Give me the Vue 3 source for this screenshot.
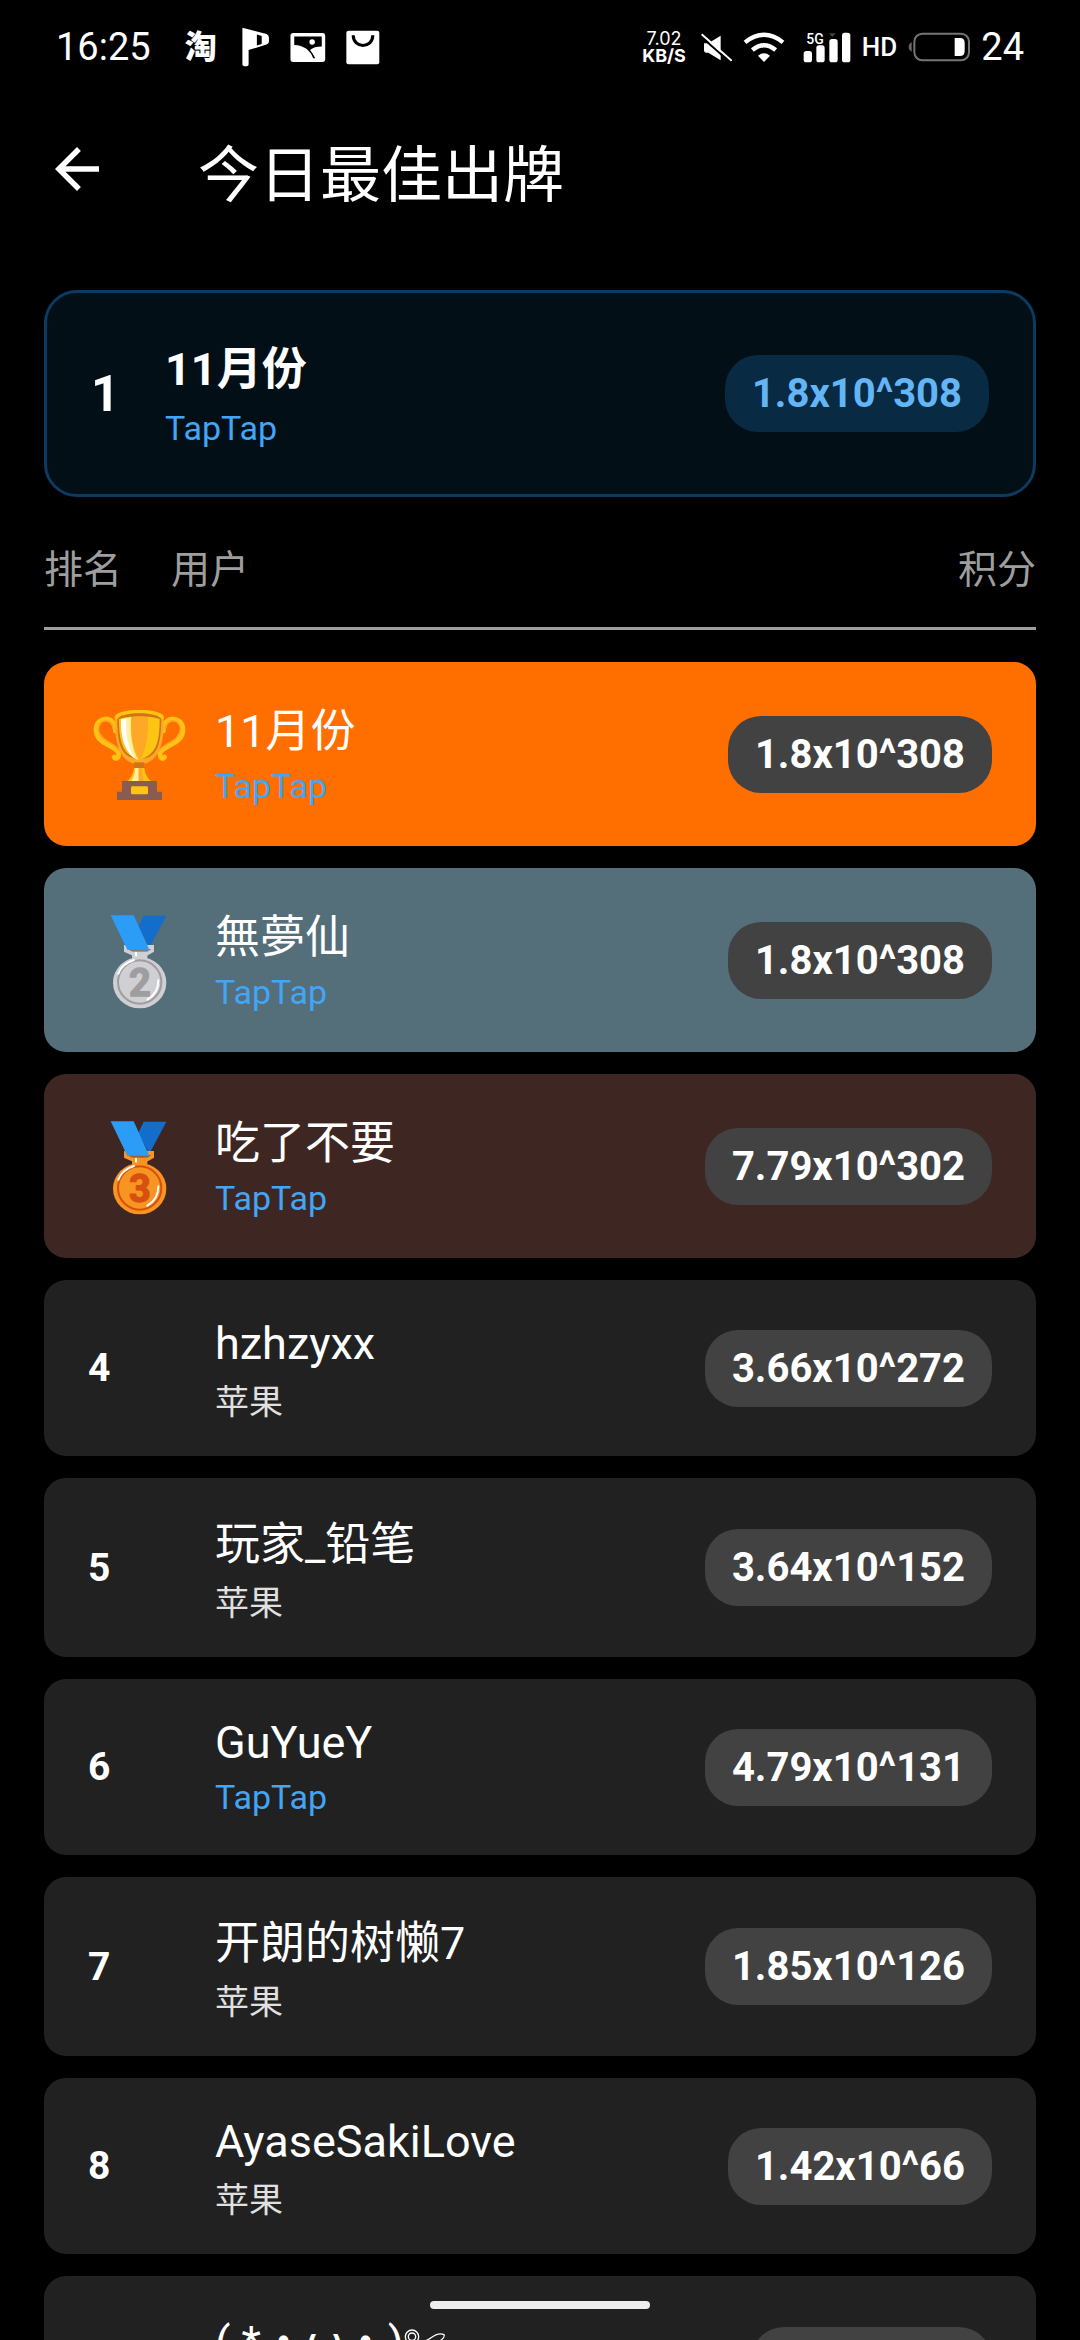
<script setup>
import { ref } from 'vue'

const best = ref({ rank: 1, name: '11月份', source: 'TapTap', score: '1.8x10^308' })

const players = ref([
  { rank: 1, name: '11月份', source: 'TapTap', score: '1.8x10^308' },
  { rank: 2, name: '無夢仙', source: 'TapTap', score: '1.8x10^308' },
  { rank: 3, name: '吃了不要', source: 'TapTap', score: '7.79x10^302' },
  { rank: 4, name: 'hzhzyxx', source: '苹果', score: '3.66x10^272' },
  { rank: 5, name: '玩家_铅笔', source: '苹果', score: '3.64x10^152' },
  { rank: 6, name: 'GuYueY', source: 'TapTap', score: '4.79x10^131' },
  { rank: 7, name: '开朗的树懒7', source: '苹果', score: '1.85x10^126' },
  { rank: 8, name: 'AyaseSakiLove', source: '苹果', score: '1.42x10^66' },
  { rank: 9, name: '( *・ω・)', source: '苹果', score: '1.3x10^66', flower: true }
])

// 银牌 / 铜牌配色
const medals = {
  2: { body: '#d0cfd4', ring: '#9e9ea0', shine: '#ffffff' },
  3: { body: '#f79422', ring: '#d8500f', shine: '#ffffff' }
}

const isWide = (text) => /[^\x00-\x7f]/.test(text)

const goBack = () => window.history.back()
</script>

<template>
  <div class="screen">
    <div class="status-bar">
      <div class="status-left">
        <span class="clock">16:25</span>
        <span class="tao">淘</span>
        <svg class="ic-flag" viewBox="704 82 84 116">
          <path d="M708 84 L778 102 Q785 105 785 112 V125 Q785 130 778 133 L726 149 V190 Q726 196 718 196 Q708 196 708 190 Z" fill="#fff" />
          <path d="M750 104 L764 108 V131 L750 136 Z" fill="#000" />
        </svg>
        <svg class="ic-photo" viewBox="850 92 104 96">
          <rect x="851" y="98" width="101" height="84" rx="8" fill="#fff" />
          <path d="M862 108 H942 V137 Q920 137 908 147 Q917 158 923 171 H917 Q903 135 862 133 Z" fill="#000" />
          <circle cx="914" cy="124" r="8" fill="#fff" />
        </svg>
        <svg class="ic-bag" viewBox="1012 88 99 102">
          <rect x="1013" y="90" width="96" height="98" rx="6" fill="#fff" />
          <path d="M1033 103 C1033 143 1090 143 1090 103" fill="none" stroke="#000" stroke-width="9" />
        </svg>
      </div>

      <div class="status-right">
        <div class="net-speed">
          <span>7.02</span>
          <b>KB/S</b>
        </div>
        <svg class="ic-mute" viewBox="303 93 93 87">
          <path d="M312 124 H325 L362 101 V175 L325 152 H318 Q312 152 312 145 Z" fill="#fff" />
          <path d="M301 102 L392 182" stroke="#000" stroke-width="6" />
          <path d="M305 97 L395 176" stroke="#fff" stroke-width="6" />
        </svg>
        <svg class="ic-wifi" viewBox="428 90 126 93">
          <path d="M434 121 Q491 76 548 121" fill="none" stroke="#fff" stroke-width="13" />
          <path d="M456 144 Q491 115 526 144" fill="none" stroke="#fff" stroke-width="13" />
          <path d="M473 161 Q491 147 509 161 L491 180 Z" fill="#fff" />
        </svg>
        <svg class="ic-signal" viewBox="606 90 144 93">
          <text x="616" y="125" class="net-type">5G</text>
          <rect x="608" y="147" width="25" height="34" rx="8" fill="#fff" />
          <rect x="646" y="130" width="25" height="51" rx="8" fill="#fff" />
          <rect x="685" y="111" width="25" height="70" rx="8" fill="#fff" />
          <rect x="723" y="92" width="25" height="89" rx="8" fill="#fff" />
          <path d="M684 94 H704 L694 105 Z" fill="#444" />
        </svg>
        <span class="hd">HD</span>
        <svg class="ic-battery" viewBox="928 93 186 90">
          <path d="M939 124 Q930 128 930 138 Q930 148 939 152 Z" fill="#666" />
          <rect x="947" y="98" width="164" height="80" rx="24" fill="none" stroke="#757575" stroke-width="6" />
          <path d="M1068 111 H1084 Q1098 111 1098 126 V150 Q1098 165 1084 165 H1068 Z" fill="#fff" />
        </svg>
        <span class="clock">24</span>
      </div>
    </div>

    <header class="app-bar">
      <button class="back" aria-label="返回" @click="goBack">
        <svg viewBox="4 4 16 16">
          <path d="M20 11H7.83l5.59-5.59L12 4l-8 8 8 8 1.41-1.41L7.83 13H20v-2z" fill="#fff" />
        </svg>
      </button>
      <h1>今日最佳出牌</h1>
    </header>

    <main class="content">
      <section class="best">
        <span class="best-rank">{{ best.rank }}</span>
        <div class="best-user">
          <div class="best-name">{{ best.name }}</div>
          <div class="source taptap">{{ best.source }}</div>
        </div>
        <span class="score score-blue">{{ best.score }}</span>
      </section>

      <table class="board">
        <thead>
          <tr>
            <th>排名</th>
            <th>用户</th>
            <th class="right">积分</th>
          </tr>
        </thead>
        <tbody>
          <tr v-for="p in players" :key="p.rank" :class="['row', 'rank-' + p.rank]">
            <td class="rank">
              <svg v-if="p.rank === 1" class="medal" viewBox="174 156 309 309">
                <g fill="none" stroke="#fdc511" stroke-width="14" stroke-linecap="round">
                  <path d="M256 240 C256 190 198 195 198 236 C198 284 264 282 266 310 C266 324 256 326 252 318" />
                  <path d="M400 240 C400 190 459 195 459 236 C459 284 392 282 390 310 C390 324 400 326 404 318" />
                </g>
                <g fill="none" stroke="#ffa726" stroke-width="5" stroke-linecap="round">
                  <path d="M250 232 C248 200 205 200 205 236 C207 270 260 278 268 300" />
                  <path d="M406 232 C408 200 452 200 452 236 C450 270 398 278 388 300" />
                </g>
                <path d="M254 200 C254 169 402 169 402 200 C402 268 392 338 328 340 C264 338 254 268 254 200 Z" fill="#ffa726" />
                <path d="M254 200 C254 169 402 169 402 200 L394 206 C392 180 264 180 262 206 Z" fill="#fdc511" />
                <path d="M262 206 C264 180 392 180 394 206 C392 270 386 304 354 319 L328 326 L302 319 C270 304 262 270 262 206 Z" fill="#d07516" />
                <path d="M267 204 C290 194 366 194 389 204 C389 262 382 300 348 318 L328 328 L308 318 C274 300 267 262 267 204 Z" fill="#fdc511" />
                <path d="M304 198 C320 196 338 196 354 198 C356 246 350 292 330 328 C306 292 302 246 304 198 Z" fill="#ffa726" />
                <path d="M273 205 L303 199 C300 250 306 296 324 327 C286 308 272 262 273 205 Z" fill="#fff0a6" />
                <path d="M273 205 L288 202 C286 252 296 296 316 324 C286 304 272 262 273 205 Z" fill="#fff" />
                <path d="M312 334 H343 V352 H312 Z" fill="#d07516" />
                <path d="M312 351 H343 Q346 376 362 390 H293 Q309 376 312 351 Z" fill="#fdc511" />
                <path d="M316 351 H326 V390 H304 Q315 374 316 351 Z" fill="#fff0a6" />
                <path d="M326 351 H336 Q337 374 342 390 H326 Z" fill="#ffa726" />
                <path d="M276 390 H381 V422 H396 V447 H261 V422 H276 Z" fill="#8a5b50" />
                <rect x="303" y="406" width="51" height="24" rx="4" fill="#fdc511" />
              </svg>
              <svg v-else-if="medals[p.rank]" class="medal" viewBox="174 146 309 309">
                <path d="M341 166 H409 L358 262 L325 200 Z" fill="#126dcb" />
                <path
                  d="M282 254 H372 V274 L348 288 Q354 298 330 298 Q306 298 312 288 L282 274 Z"
                  :fill="medals[p.rank].body"
                />
                <path d="M292 266 L314 278 H346 L364 266 Z" fill="#4a4547" opacity="0.6" />
                <path d="M306 274 H352 V294 H306 Z" :fill="medals[p.rank].body" />
                <path d="M242 165 H311 L358 268 H292 Z" fill="#2b9df6" />
                <ellipse cx="329" cy="367" rx="80" ry="77" :fill="medals[p.rank].body" />
                <ellipse
                  cx="329" cy="365" rx="65" ry="65" fill="none"
                  :stroke="medals[p.rank].ring" stroke-width="6"
                />
                <g fill="none" :stroke="medals[p.rank].shine" stroke-width="6" stroke-linecap="round">
                  <path d="M265 340 Q276 310 312 299" />
                  <path d="M385 360 Q385 400 352 418" />
                  <path d="M318 277 V286" />
                </g>
                <text
                  x="330" y="407" class="medal-num"
                  :fill="medals[p.rank].ring" :stroke="medals[p.rank].ring"
                >{{ p.rank }}</text>
              </svg>
              <template v-else>{{ p.rank }}</template>
            </td>
            <td class="user">
              <div :class="['name', { wide: isWide(p.name) }]">
                {{ p.name }}<svg v-if="p.flower" class="flower" viewBox="0 0 132 90">
                  <g fill="none" stroke="#fff" stroke-width="4">
                    <circle cx="24" cy="26" r="20" />
                    <circle cx="24" cy="26" r="11" />
                    <path d="M40 38 Q62 44 80 30 Q104 12 120 20 Q124 28 104 42 Q84 56 60 80" />
                  </g>
                </svg>
              </div>
              <div :class="['source', { taptap: p.source === 'TapTap' }]">{{ p.source }}</div>
            </td>
            <td class="right"><span class="score">{{ p.score }}</span></td>
          </tr>
        </tbody>
      </table>
    </main>

    <div class="home-indicator"></div>
  </div>
</template>

<style>
body { background: #000; }
</style>

<style scoped>
.screen {
  position: relative;
  display: flex;
  flex-direction: column;
  height: 100vh;
  overflow: hidden;
  background: #000;
  color: #fff;
  font-family: Roboto, 'Noto Sans CJK SC', sans-serif;
}
svg { display: block; flex-shrink: 0; }

/* 状态栏 */
.status-bar { display: flex; justify-content: space-between; align-items: center; height: 92px; padding: 2px 56px 0; box-sizing: border-box; flex-shrink: 0; }
.status-left, .status-right { display: flex; align-items: center; }
.status-right { gap: 11px; }
.clock { font-size: 38px; line-height: 44px; }
.tao { margin: 0 24px 0 34px; font-size: 32px; line-height: 44px; font-weight: 900; }
.ic-flag { width: 29px; height: 40px; margin-right: 20px; }
.ic-photo { width: 36px; height: 33px; margin-right: 20px; }
.ic-bag { width: 34px; height: 35px; }
.net-speed { display: flex; flex-direction: column; align-items: center; margin-right: 4px; font-family: Inter, Roboto, sans-serif; font-size: 18px; line-height: 17px; }
.ic-mute { width: 31px; height: 29px; }
.ic-wifi { width: 42px; height: 31px; margin-right: 7px; }
.ic-signal { width: 48px; height: 31px; }
.net-type { font-family: Roboto, sans-serif; font-size: 42px; font-weight: 500; fill: #fff; }
.hd { font-size: 26px; line-height: 44px; font-weight: 500; }
.ic-battery { width: 62px; height: 30px; }

/* 标题栏 */
.app-bar { display: flex; align-items: center; gap: 88px; height: 154px; padding: 0 44px; flex-shrink: 0; }
.back { display: flex; align-items: center; justify-content: center; width: 66px; height: 66px; padding: 0; border: none; background: none; cursor: pointer; }
.back svg { width: 44px; height: 44px; }
h1 { margin: 0; padding-top: 14px; font-size: 61px; line-height: 88px; font-weight: 400; }

.content { flex: 1; min-height: 0; overflow: hidden; padding: 44px 44px 0; }

/* 当前最佳 */
.best { display: flex; align-items: center; height: 207px; padding: 0 44px; border: 3px solid #0d3a61; border-radius: 33px; background: #020f17; box-sizing: border-box; }
.best-rank { width: 74px; font-size: 50px; line-height: 58px; font-weight: 700; }
.best-user { flex: 1; }
.best-name { font-size: 45px; line-height: 60px; font-weight: 700; }

.source { height: 48px; font-size: 34px; line-height: 64px; color: #e0e0e0; }
.source.taptap { line-height: 56px; color: #42a5f5; }
.score { display: inline-block; padding: 0 27px; border-radius: 33px; background: #424242; font-size: 40px; line-height: 77px; font-weight: 700; white-space: nowrap; }
.score-blue { background: #092a43; color: #64b5f6; }

/* 排行榜 */
.board, tbody { display: flex; flex-direction: column; }
thead { display: block; margin: 44px 0 32px; padding-bottom: 28px; border-bottom: 3px solid #9e9e9e; }
tbody { gap: 22px; }
tr { display: grid; grid-template-columns: 127px 1fr auto; align-items: center; }
th { padding: 0; font-size: 39px; line-height: 58px; font-weight: 400; color: #9e9e9e; text-align: left; }
td { padding: 0; }
th.right, td.right { text-align: right; }
.row { padding: 38px 44px; border-radius: 22px; background: #212121; }
.rank-1 { background: #ff6f00; }
.rank-2 { background: #546e7a; }
.rank-3 { background: #3e2723; }
.rank-1, .rank-2, .rank-3 { min-height: 108px; }
.rank { font-size: 39px; font-weight: 700; }
.medal { width: 103px; height: 103px; }
.medal-num { font-family: Roboto, sans-serif; font-size: 114px; font-weight: 700; text-anchor: middle; stroke-width: 4; stroke-linejoin: round; }
.name { display: flex; align-items: flex-start; height: 52px; font-size: 45px; line-height: 52px; white-space: pre; }
.name.wide { height: 55px; line-height: 57px; }
.flower { width: 44px; height: 30px; margin-top: 14px; }

.home-indicator { position: absolute; left: 50%; bottom: 31px; width: 220px; height: 8px; margin-left: -110px; border-radius: 4px; background: #eee; }
</style>
